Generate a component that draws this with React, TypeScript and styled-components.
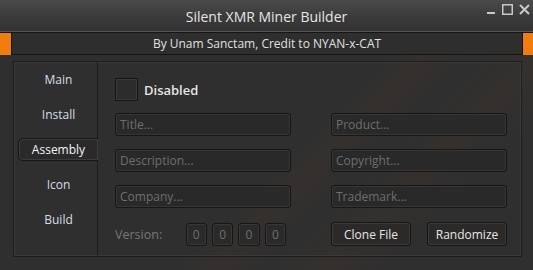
import * as React from 'react';
import styled, { createGlobalStyle } from 'styled-components';

const GlobalStyle = createGlobalStyle`
  html, body {
    margin: 0;
    padding: 0;
    background: #2e2e2e;
  }
  * {
    box-sizing: border-box;
  }
`;

const Window = styled.div`
  width: 533px;
  height: 270px;
  overflow: hidden;
  font-family: 'Open Sans', 'Noto Sans', sans-serif;
  background:
    linear-gradient(135deg, transparent 55%, rgba(120, 60, 30, 0.08) 60%, transparent 66%, rgba(120, 60, 30, 0.07) 74%, transparent 82%),
    #2f2f2f;
  display: flex;
  flex-direction: column;
`;

const TitleBar = styled.div`
  height: 32px;
  display: grid;
  grid-template-columns: 1fr auto 1fr;
  align-items: center;
  background: linear-gradient(#4b4b4b, #3a3a3a 55%, #333 100%);
  border-bottom: 1px solid #565656;
`;

const Title = styled.div`
  grid-column: 2;
  color: #e6e6e6;
  font-size: 14px;
  padding-top: 1px;
`;

const Controls = styled.div`
  justify-self: end;
  align-self: start;
  display: flex;
  align-items: flex-start;
  gap: 6px;
  padding: 4px 3px 0 0;
`;

const Band = styled.div`
  height: 23px;
  display: flex;
  border-top: 1px solid #151515;
  background: #151515;
`;

const Orange = styled.div<{ $w: number }>`
  width: ${p => p.$w}px;
  background: #f07d0d;
`;

const Credit = styled.div`
  flex: 1;
  margin: 0 1px 1px;
  background: #2e2e2e;
  color: #e0e0e0;
  font-size: 12px;
  display: flex;
  align-items: center;
  justify-content: center;
`;

const Main = styled.div`
  margin: 6px 11px 0 13px;
  height: 196px;
  display: flex;
  border: 1px solid #1d1d1d;
  box-shadow: inset 0 0 0 1px #3a3a3a;
`;

const Sidebar = styled.div`
  width: 86px;
  border-right: 1px solid #1d1d1d;
  display: flex;
  flex-direction: column;
  align-items: flex-end;
  padding-top: 6px;
  gap: 12px;
`;

const Tab = styled.div<{ $active?: boolean }>`
  width: 80px;
  height: 23px;
  display: flex;
  align-items: center;
  justify-content: center;
  font-size: 12px;
  color: ${p => (p.$active ? '#f2f4f8' : '#d6dde6')};
  background: ${p => (p.$active ? '#2a2a2a' : 'transparent')};
  border: 1px solid ${p => (p.$active ? '#171717' : 'transparent')};
  border-right: none;
  border-radius: 5px 0 0 5px;
  margin-right: -1px;
  box-shadow: ${p => (p.$active ? 'inset 0 0 0 1px #3c3c3c' : 'none')};
`;

const Content = styled.div`
  flex: 1;
  padding: 16px 14px 0 17px;
  display: grid;
  grid-template-columns: 176px 176px;
  column-gap: 40px;
  row-gap: 13px;
  align-content: start;
`;

const CheckRow = styled.div`
  grid-column: 1 / 3;
  display: flex;
  align-items: center;
  gap: 6px;
  height: 23px;
  margin-bottom: -1px;
`;

const CheckBox = styled.div`
  width: 23px;
  height: 23px;
  border: 1px solid #151515;
  background: #2c2c2c;
  box-shadow: inset 0 0 0 1px #3a3a3a;
`;

const CheckLabel = styled.span`
  color: #e4e4e4;
  font-size: 13px;
  font-weight: 600;
`;

const Field = styled.div`
  height: 23px;
  border: 1px solid #161616;
  border-radius: 3px;
  background: rgba(40, 40, 40, 0.85);
  box-shadow: inset 0 0 0 1px #363636;
  color: #6e6e6e;
  font-size: 12px;
  padding-left: 4px;
  display: flex;
  align-items: center;
`;

const VersionRow = styled.div`
  display: flex;
  align-items: center;
  height: 23px;
  margin-top: 2px;
`;

const VersionLabel = styled.span`
  color: #777;
  font-size: 12.5px;
  width: 73px;
`;

const VersionBox = styled.div`
  width: 22px;
  height: 23px;
  margin-right: 5px;
  border: 1px solid #161616;
  border-radius: 3px;
  background: #2a2a2a;
  box-shadow: inset 0 0 0 1px #383838;
  color: #6e6e6e;
  font-size: 12px;
  display: flex;
  align-items: center;
  justify-content: center;
`;

const ButtonRow = styled.div`
  display: flex;
  justify-content: space-between;
  margin-top: 1px;
`;

const Button = styled.div`
  width: 80px;
  height: 24px;
  border: 1px solid #151515;
  border-radius: 3px;
  background: #2c2929;
  box-shadow: inset 0 0 0 1px #3c3a3a;
  color: #e6e6e6;
  font-size: 12px;
  display: flex;
  align-items: center;
  justify-content: center;
`;

const WinIcon = () => (
  <>
    <svg width="10" height="11" viewBox="0 0 10 11">
      <rect x="1" y="8" width="8" height="2" fill="#c8c8c8" />
    </svg>
    <svg width="11" height="11" viewBox="0 0 11 11">
      <rect x="0.75" y="0.75" width="9.5" height="9.5" fill="none" stroke="#c8c8c8" strokeWidth="1.5" />
    </svg>
    <svg width="11" height="11" viewBox="0 0 11 11">
      <path d="M1 1 L10 10 M10 1 L1 10" stroke="#c8c8c8" strokeWidth="2" />
    </svg>
  </>
);

const tabs = ['Main', 'Install', 'Assembly', 'Icon', 'Build'];

export default function App() {
  return (
    <Window>
      <GlobalStyle />
      <TitleBar>
        <Title>Silent XMR Miner Builder</Title>
        <Controls>
          <WinIcon />
        </Controls>
      </TitleBar>
      <Band>
        <Orange $w={11} />
        <Credit>By Unam Sanctam, Credit to NYAN-x-CAT</Credit>
        <Orange $w={10} />
      </Band>
      <Main>
        <Sidebar>
          {tabs.map(t => (
            <Tab key={t} $active={t === 'Assembly'}>{t}</Tab>
          ))}
        </Sidebar>
        <Content>
          <CheckRow>
            <CheckBox />
            <CheckLabel>Disabled</CheckLabel>
          </CheckRow>
          <Field>Title...</Field>
          <Field>Product...</Field>
          <Field>Description...</Field>
          <Field>Copyright...</Field>
          <Field>Company...</Field>
          <Field>Trademark...</Field>
          <VersionRow>
            <VersionLabel>Version:</VersionLabel>
            {[0, 1, 2, 3].map(i => (
              <VersionBox key={i}>0</VersionBox>
            ))}
          </VersionRow>
          <ButtonRow>
            <Button>Clone File</Button>
            <Button>Randomize</Button>
          </ButtonRow>
        </Content>
      </Main>
    </Window>
  );
}
